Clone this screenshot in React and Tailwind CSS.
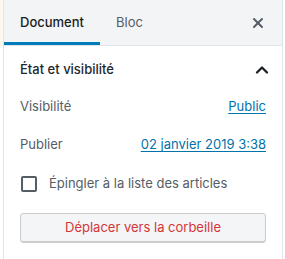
import { X, ChevronUp } from 'lucide-react';

function Row({ label, value }) {
  return (
    <div className="flex items-center justify-between h-[26px]">
      <span className="text-[#555d66]">{label}</span>
      <a href="#" className="text-[#0073aa] underline underline-offset-2">
        {value}
      </a>
    </div>
  );
}

export default function App() {
  return (
    <div
      className="flex w-[285px] h-[259px] bg-white text-[13px]"
      style={{ fontFamily: 'Inter, "Liberation Sans", sans-serif' }}
    >
      <div className="w-[3px] h-[46px] bg-[#fdf8ee]" />
      <div className="w-[280px] border-x border-[#e2e4e7] flex flex-col">
        <div className="flex items-stretch h-[46px] bg-[#f3f4f5] border-b border-[#e2e4e7]">
          <button className="relative px-4 font-medium text-[#191e23]">
            Document
            <span className="absolute left-0 right-0 bottom-0 h-[3px] bg-[#007cba]" />
          </button>
          <button className="px-4 text-[#555d66]">Bloc</button>
          <button className="ml-auto w-[48px] flex items-center justify-center text-[#555d66]">
            <X size={16} strokeWidth={3} />
          </button>
        </div>

        <div className="px-4">
          <div className="flex items-center justify-between h-[48px]">
            <span className="font-medium text-[#23282d]">État et visibilité</span>
            <ChevronUp size={20} strokeWidth={2.75} className="text-[#191e23] mr-[-6px]" />
          </div>

          <Row label="Visibilité" value="Public" />
          <div className="mt-3">
            <Row label="Publier" value="02 janvier 2019 3:38" />
          </div>

          <label className="mt-[13px] flex items-center h-[26px] gap-3">
            <span className="ml-px w-[16px] h-[16px] border-2 border-[#555d66] rounded-[2px]" />
            <span className="text-[#555d66]">Épingler à la liste des articles</span>
          </label>

          <button className="mt-4 w-full h-[30px] rounded-[3px] border border-[#ccc] bg-[#f3f5f6] shadow-[inset_0_-1px_0_#ccc] text-[#d63638]">
            Déplacer vers la corbeille
          </button>
        </div>
      </div>
    </div>
  );
}
